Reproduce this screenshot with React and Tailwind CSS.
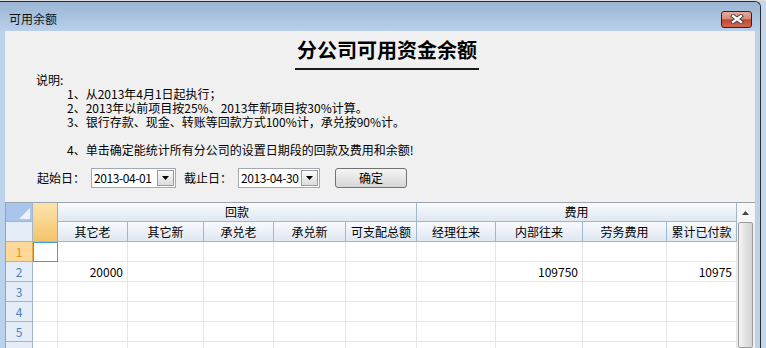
import React from "react";

const heads = ["其它老", "其它新", "承兑老", "承兑新", "可支配总额", "经理往来", "内部往来", "劳务费用", "累计已付款"];

const rows = [
  { n: 1, vals: {} },
  { n: 2, vals: { 0: "20000", 6: "109750", 8: "10975" } },
  { n: 3, vals: {} },
  { n: 4, vals: {} },
  { n: 5, vals: {} },
  { n: "", vals: {} },
];

const hdr = "bg-[linear-gradient(#f8fafd,#dfe7f2)] border-r border-b border-[#9fb6d0] flex items-center justify-center";

const DateBox = ({ value, width }) => (
  <div className={`${width} h-[20px] bg-white border border-[#a3a9b1] flex items-center pl-[2px] overflow-hidden`}>
    <span className="leading-none whitespace-nowrap tracking-[-0.4px]">{value}</span>
    <div className="ml-auto mr-[1px] shrink-0 w-[17px] h-[16px] border border-[#9a9a9a] bg-[linear-gradient(#fafafa,#dcdcdc)] flex items-center justify-center">
      <svg width="7" height="4" viewBox="0 0 7 4">
        <path d="M0 0h7L3.5 4z" fill="#000" />
      </svg>
    </div>
  </div>
);

const App = () => {
  return (
    <div className="w-[766px] h-[348px] overflow-hidden flex flex-col bg-[#c4d7ec] font-['Noto_Sans_CJK_SC',sans-serif] text-[12px] text-black">
      <div className="h-[1px] bg-[#dcdcdc]" />
      <div className="flex flex-1 min-h-0">
        <div className="w-[761px] flex flex-col border-t border-r border-[#2c2c2c] rounded-tr-[6px] bg-[#bad2ec]">
          {/* title bar */}
          <div className="h-[29px] pt-[5px] flex items-center bg-[linear-gradient(#9ab4d2,#b8d0ea)] rounded-tr-[6px]">
            <span className="pl-[9px] leading-none text-[#111]">可用余额</span>
            <div className="ml-auto mr-[8px] w-[31px] h-[17px] rounded-[3px] border border-[#3e1a1a] bg-[linear-gradient(#eaaa9c,#d98a78_45%,#c3462d_52%,#d06a52)] flex items-center justify-center">
              <svg width="14" height="10" viewBox="0 0 14 10">
                <path d="M3 2l8 6M11 2l-8 6" stroke="#4a4a4a" strokeWidth="4.2" strokeLinecap="square" />
                <path d="M3 2l8 6M11 2l-8 6" stroke="#fff" strokeWidth="2.2" strokeLinecap="square" />
              </svg>
            </div>
          </div>

          {/* panel */}
          <div className="flex-1 min-h-0 ml-[5px] mr-[5px] bg-[#f0f0f0] flex flex-col">
            <div className="ml-[290px] w-[184px] mt-[7px] pb-[6px] border-b-2 border-[#1a1a1a] text-center text-[20px] leading-[24px] font-bold">
              分公司可用资金余额
            </div>

            <div className="mt-[3px] pl-[31px] leading-[14px]">
              <div>说明:</div>
              <div className="pl-[31px]">
                <div>1、从2013年4月1日起执行；</div>
                <div>2、2013年以前项目按25%、2013年新项目按30%计算。</div>
                <div>3、银行存款、现金、转账等回款方式100%计，承兑按90%计。</div>
                <div>&nbsp;</div>
                <div>4、单击确定能统计所有分公司的设置日期段的回款及费用和余额!</div>
              </div>
            </div>

            <div className="mt-[11px] h-[20px] pl-[32px] flex items-center">
              <span className="w-[54px]">起始日：</span>
              <DateBox value="2013-04-01" width="w-[85px]" />
              <span className="ml-[8px] w-[54px]">截止日：</span>
              <DateBox value="2013-04-30" width="w-[82px]" />
              <button className="ml-[15px] w-[72px] h-[20px] rounded-[3px] border border-[#727272] bg-[linear-gradient(#f4f4f4,#e6e6e6_50%,#d6d6d6)] flex items-center justify-center">
                确定
              </button>
            </div>

            {/* grid */}
            <div className="mt-[14px] flex-1 min-h-0 flex overflow-hidden border-t border-l border-[#9aa2ac]">
              <div className="grid grid-cols-[27px_25px_70px_76px_70px_72px_71px_79px_87px_84px_70px] grid-rows-[19px_20px_repeat(6,20px)] bg-white">
                <div className="bg-[#a9c5eb] border-r border-b border-[#9fb6d0] flex items-end justify-end pr-[2px] pb-[2px]">
                  <svg width="11" height="11" viewBox="0 0 11 11">
                    <path d="M11 0v11H0z" fill="#eef3fa" />
                  </svg>
                </div>
                <div className="row-span-2 bg-[linear-gradient(#fde3ae,#f4c46a)] border-r border-b border-r-[#f29a2e] border-b-[#e9b25c]" />
                <div className={`col-span-5 ${hdr}`}>回款</div>
                <div className={`col-span-4 ${hdr}`}>费用</div>

                <div className="bg-[#e4ecf7] border-r border-b border-[#9fb6d0]" />
                {heads.map((h) => (
                  <div key={h} className={hdr}>
                    {h}
                  </div>
                ))}

                {rows.map((r, ri) => (
                  <React.Fragment key={ri}>
                    <div
                      className={
                        r.n === 1
                          ? "bg-[#fdd89b] border-r border-b border-[#f0a93c] text-[#e8901a] flex items-center justify-center"
                          : "bg-[#e4ecf7] border-r border-b border-[#9fb6d0] text-[#4d80b9] flex items-center justify-center"
                      }
                    >
                      {r.n}
                    </div>
                    <div
                      className={
                        r.n === 1
                          ? "border border-[#3d9af2]"
                          : "border-r border-b border-[#e6e6e6]"
                      }
                    />
                    {heads.map((h, i) => (
                      <div
                        key={h}
                        className="border-r border-b border-[#e6e6e6] flex items-center justify-end pr-[4px] last:pr-[1px]"
                      >
                        {r.vals[i] || ""}
                      </div>
                    ))}
                  </React.Fragment>
                ))}
              </div>

              {/* scrollbar */}
              <div className="w-[17px] flex flex-col bg-[#f0f0f0]">
                <div className="h-[19px] flex items-center justify-center bg-[#f6f6f6]">
                  <svg width="7" height="4" viewBox="0 0 7 4">
                    <path d="M0 4h7L3.5 0z" fill="#444" />
                  </svg>
                </div>
                <div className="flex-1 mx-[1px] border border-[#9c9c9c] rounded-[2px] bg-[linear-gradient(to_right,#f6f6f6,#e2e2e2,#d4d4d4)]" />
              </div>
            </div>
          </div>
        </div>
        <div className="flex-1 bg-[#c4d7ec]" />
      </div>
    </div>
  );
};

export default App;
